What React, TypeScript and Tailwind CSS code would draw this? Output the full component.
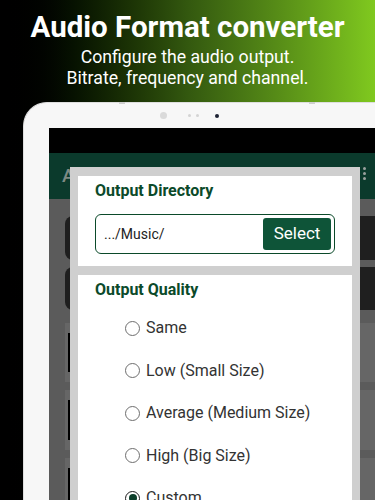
const qualities = [
  { label: "Same", checked: false },
  { label: "Low (Small Size)", checked: false },
  { label: "Average (Medium Size)", checked: false },
  { label: "High (Big Size)", checked: false },
  { label: "Custom", checked: true },
];

const Radio = ({ label, checked }: { label: string; checked: boolean }) => (
  <div className="flex items-center h-[42.5px]">
    <span
      className={
        checked
          ? "w-[15px] h-[15px] rounded-full border-[1.5px] border-[#1a1a1a] flex items-center justify-center"
          : "w-[15px] h-[15px] rounded-full border-[1.5px] border-[#6e6e6e]"
      }
    >
      {checked && <span className="w-[8px] h-[8px] rounded-full bg-[#0c3f2a]" />}
    </span>
    <span className="ml-[6px] text-[16px] text-[#333]">{label}</span>
  </div>
);

export default function App() {
  return (
    <div className="w-[375px] h-[500px] overflow-hidden flex flex-col bg-gradient-to-r from-black via-[#33580f] to-[#80c91f] font-['Roboto',sans-serif]">
      {/* header */}
      <div className="h-[102px] shrink-0 pt-[10px] text-center text-white">
        <h1 className="text-[29.5px] font-bold leading-[34px]">Audio Format converter</h1>
        <p className="text-[17.7px] leading-[21px] mt-[2.5px]">Configure the audio output.</p>
        <p className="text-[17.7px] leading-[21px]">Bitrate, frequency and channel.</p>
      </div>

      {/* tablet */}
      <div className="flex-1 ml-[23px] relative rounded-tl-[24px] bg-[#f7f7f7] border-l border-t border-[#dedede] flex flex-col">
        <span className="absolute -top-px left-[95px] w-[6px] h-[2px] bg-[#cfcfcf]" />
        <span className="absolute -top-px left-[285px] w-[6px] h-[2px] bg-[#cfcfcf]" />
        <div className="h-[25px] shrink-0 flex items-center pl-[136px]">
          <span className="w-[7px] h-[7px] rounded-full bg-[#dadada]" />
          <span className="ml-[21px] w-[3px] h-[3px] rounded-full bg-[#d4d4d4]" />
          <span className="ml-[5px] w-[3px] h-[3px] rounded-full bg-[#d4d4d4]" />
          <span className="ml-[16px] w-[4px] h-[4px] rounded-full bg-[#1c2233]" />
        </div>

        {/* screen */}
        <div className="flex-1 ml-[25px] relative bg-[#5b5b5b] flex flex-col overflow-hidden">
          <div className="h-[25px] shrink-0 bg-black" />
          <div className="h-[46px] shrink-0 bg-[#0b3a2c] flex items-center justify-between pl-[13px] pr-[9px]">
            <span className="text-[19px] font-medium text-[#7e8a84]">Audio Converter</span>
            <span className="flex flex-col gap-[2px] -mt-[6px]">
              <span className="w-[3px] h-[3px] rounded-full bg-[#9aa19e]" />
              <span className="w-[3px] h-[3px] rounded-full bg-[#9aa19e]" />
              <span className="w-[3px] h-[3px] rounded-full bg-[#9aa19e]" />
            </span>
          </div>

          {/* dimmed app content */}
          <div className="flex-1 pl-[16px] pt-[17px] flex flex-col">
            <div className="h-[44px] rounded-l-[8px] bg-[#1f1f1f]" />
            <div className="h-[43px] mt-[7px] rounded-l-[8px] bg-[#1f1f1f]" />
            <div className="h-[59px] mt-[13px] bg-[#666] flex">
              <span className="w-[2px] ml-[3px] my-[10px] bg-black" />
            </div>
            <div className="h-[60px] mt-[8px] bg-[#666] flex">
              <span className="w-[2px] ml-[3px] my-[10px] bg-black" />
            </div>
            <div className="h-[60px] mt-[8px] bg-[#666] flex">
              <span className="w-[2px] ml-[3px] my-[10px] bg-black" />
            </div>
          </div>

          {/* dialog */}
          <div className="absolute left-[21px] top-[39px] w-[290px] h-[400px] bg-[#cfcfcf] px-[8px] pt-[9px] flex flex-col gap-[9px]">
            <div className="bg-white h-[90px] px-[17px] pt-[5px]">
              <h2 className="text-[16px] font-bold leading-[20px] text-[#0b4a2a]">Output Directory</h2>
              <div className="mt-[13px] h-[40px] rounded-[6px] border border-[#0b4a2a] flex items-center pl-[8px] pr-[3px]">
                <span className="flex-1 text-[14px] text-[#222]">.../Music/</span>
                <button className="w-[68px] h-[32px] rounded-[3px] bg-[#0e5438] text-white text-[17px]">
                  Select
                </button>
              </div>
            </div>
            <div className="bg-white flex-1 pt-[5px]">
              <h2 className="px-[17px] text-[16px] font-bold leading-[20px] text-[#0b4a2a]">Output Quality</h2>
              <div className="pl-[47px] mt-[7px]">
                {qualities.map((q) => (
                  <Radio key={q.label} label={q.label} checked={q.checked} />
                ))}
              </div>
            </div>
          </div>
        </div>
      </div>
    </div>
  );
}
